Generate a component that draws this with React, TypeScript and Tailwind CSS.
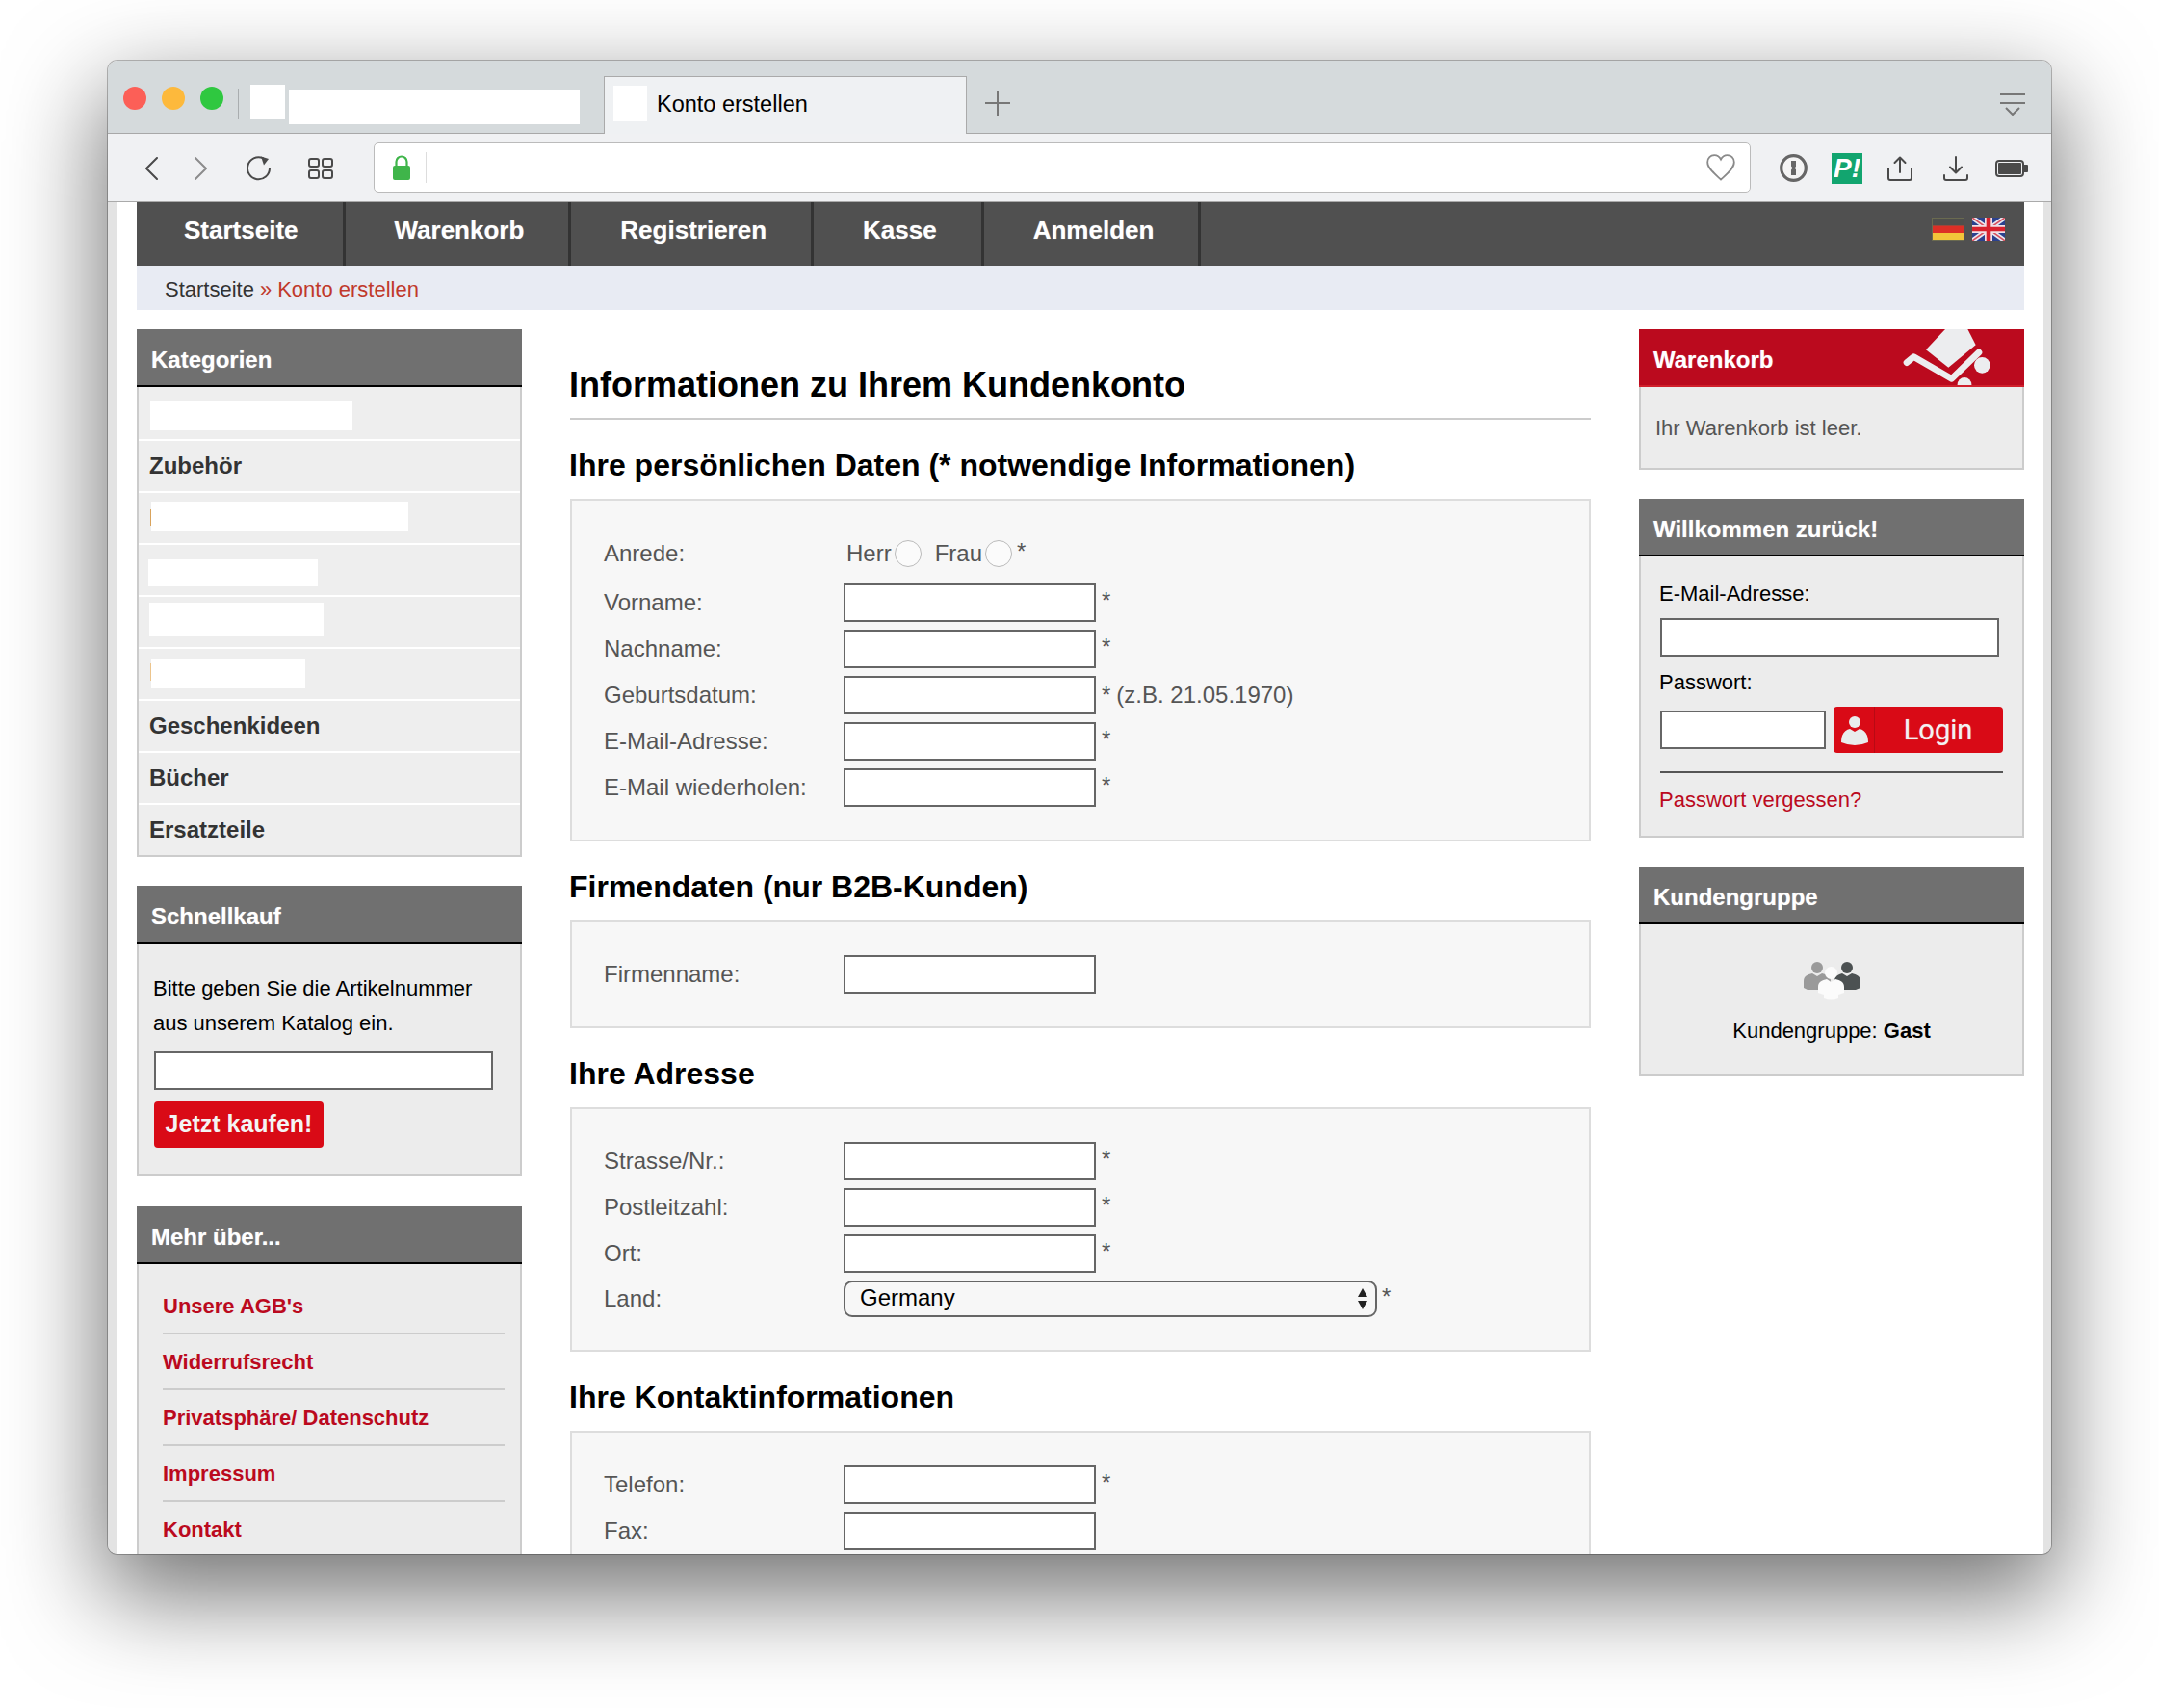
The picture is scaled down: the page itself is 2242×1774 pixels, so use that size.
import React from 'react';

const inputCls = 'block h-[40px] border-2 border-[#666] bg-white';

const Panel = ({ title, red, bodyCls, children, icon }: { title: string; red?: boolean; bodyCls: string; children: React.ReactNode; icon?: React.ReactNode }) => (
  <section>
    <div className={red
      ? 'relative flex h-[60px] items-center overflow-hidden border-b-2 border-[#d0202c] bg-[#bb0a1e] pl-[15px] pt-[6px] text-[24px] font-bold text-white [text-shadow:0_0_1px_rgba(255,255,255,0.5)]'
      : 'flex h-[60px] items-center border-b-2 border-black bg-[#707070] pl-[15px] pt-[6px] text-[24px] font-bold text-white [text-shadow:0_0_1px_rgba(255,255,255,0.5)]'}>
      {title}
      {icon}
    </div>
    <div className={`border-x-2 border-b-2 border-[#ccc] bg-[#ececec] ${bodyCls}`}>{children}</div>
  </section>
);

const categories = [
  { row: 'h-[56px] border-b-2 border-white', block: 'ml-[12px] mt-[15px] h-[30px] w-[210px]' },
  { row: 'h-[54px] border-b-2 border-white', label: 'Zubehör' },
  { row: 'h-[54px] border-b-2 border-white', block: 'ml-[13px] mt-[9px] h-[31px] w-[267px]', sliver: 'bg-[#d9a35c] mt-[17px] ml-[12px] h-[17px] w-px -mr-[13px]' },
  { row: 'h-[54px] border-b-2 border-white', block: 'ml-[10px] mt-[15px] h-[28px] w-[176px]' },
  { row: 'h-[54px] border-b-2 border-white', block: 'ml-[11px] mt-[6px] h-[35px] w-[181px]' },
  { row: 'h-[54px] border-b-2 border-white', block: 'ml-[13px] mt-[10px] h-[31px] w-[160px]', sliver: 'bg-[#ecc48c] mt-[15px] ml-[12px] h-[18px] w-px -mr-[13px]' },
  { row: 'h-[54px] border-b-2 border-white', label: 'Geschenkideen' },
  { row: 'h-[54px] border-b-2 border-white', label: 'Bücher' },
  { row: 'h-[52px]', label: 'Ersatzteile' },
];

const moreLinks = ["Unsere AGB's", 'Widerrufsrecht', 'Privatsphäre/ Datenschutz', 'Impressum', 'Kontakt'];

const LeftColumn = () => (
  <aside className="flex w-[400px] shrink-0 flex-col">
    <Panel title="Kategorien" bodyCls="">
      {categories.map((c, i) => (
        <div key={i} className={`flex items-start bg-[#eeeeee] ${c.row}`}>
          {c.sliver && <div className={c.sliver} />}
          {c.block && <div className={`bg-white ${c.block}`} />}
          {c.label && <span className="ml-[11px] text-[24px] font-bold leading-[52px] text-[#333]">{c.label}</span>}
        </div>
      ))}
    </Panel>
    <div className="mt-[30px]">
      <Panel title="Schnellkauf" bodyCls="h-[241px] pl-[16px] pt-[29px]">
        <p className="-ml-px text-[22px] leading-[36px] text-black">Bitte geben Sie die Artikelnummer<br />aus unserem Katalog ein.</p>
        <input type="text" className={`${inputCls} mt-[11px] w-[352px]`} />
        <button className="mt-[12px] h-[48px] w-[176px] rounded-[4px] bg-[#d90a16] text-[25px] font-bold text-[#f4f4f4]">Jetzt kaufen!</button>
      </Panel>
    </div>
    <div className="mt-[32px]">
      <Panel title="Mehr über..." bodyCls="h-[320px] pl-[25px] pt-[15px]">
        {moreLinks.map((l, i) => (
          <div key={l} className={`h-[58px] w-[355px] text-[22px] font-bold leading-[58px] text-[#bb0a1e] ${i < 4 ? 'border-b-2 border-[#ccc]' : ''}`}>{l}</div>
        ))}
      </Panel>
    </div>
  </aside>
);

const Field = ({ label, note, star = true }: { label: string; note?: string; star?: boolean }) => (
  <div className="flex h-[40px] items-center text-[24px] text-[#555]">
    <span className="w-[249px] shrink-0">{label}</span>
    <input type="text" className={`${inputCls} w-[262px]`} />
    {star && <span className={note ? 'ml-[6px]' : 'ml-[6px] -mt-[4px]'}>*{note && <span className="ml-[6px]">{note}</span>}</span>}
  </div>
);

const FormBox = ({ children, pb }: { children: React.ReactNode; pb: string }) => (
  <div className={`flex flex-col gap-[8px] border-2 border-[#ddd] bg-[#f7f7f7] pl-[33px] pt-[34px] ${pb}`}>{children}</div>
);

const Heading = ({ children, top }: { children: React.ReactNode; top: string }) => (
  <h2 className={`${top} -ml-px mb-[15px] text-[32px] font-bold leading-[40px] text-black`}>{children}</h2>
);

const Radio = () => <input type="radio" className="h-[28px] w-[28px] appearance-none rounded-full border border-[#bbb] bg-[#fbfbfb]" />;

const MainColumn = () => (
  <main className="ml-[50px] w-[1060px] shrink-0">
    <div className="mt-[38px] border-b-2 border-[#ccc] pb-[14px]">
      <h1 className="-ml-px text-[36px] font-bold leading-[40px] text-black">Informationen zu Ihrem Kundenkonto</h1>
    </div>
    <Heading top="mt-[27px]">Ihre persönlichen Daten (* notwendige Informationen)</Heading>
    <FormBox pb="pb-[34px]">
      <div className="mb-[3px] mt-[1px] flex h-[40px] items-center text-[24px] text-[#555]">
        <span className="w-[252px] shrink-0">Anrede:</span>
        <span>Herr</span>
        <span className="ml-[3px] flex"><Radio /></span>
        <span className="ml-[14px]">Frau</span>
        <span className="ml-[3px] flex"><Radio /></span>
        <span className="ml-[5px] -mt-[4px]">*</span>
      </div>
      <Field label="Vorname:" />
      <Field label="Nachname:" />
      <Field label="Geburtsdatum:" note="(z.B. 21.05.1970)" />
      <Field label="E-Mail-Adresse:" />
      <Field label="E-Mail wiederholen:" />
    </FormBox>
    <Heading top="mt-[27px]">Firmendaten (nur B2B-Kunden)</Heading>
    <FormBox pb="pb-[34px]">
      <Field label="Firmenname:" star={false} />
    </FormBox>
    <Heading top="mt-[27px]">Ihre Adresse</Heading>
    <FormBox pb="pb-[32px]">
      <Field label="Strasse/Nr.:" />
      <Field label="Postleitzahl:" />
      <Field label="Ort:" />
      <div className="flex h-[40px] items-center text-[24px] text-[#555]">
        <span className="-mt-[3px] w-[249px] shrink-0">Land:</span>
        <div className="relative -mt-[2px] h-[38px] w-[554px]">
          <select className="h-full w-full appearance-none rounded-[9px] border-2 border-[#666] bg-[#f7f7f7] pb-[2px] pl-[15px] text-[24px] leading-[30px] text-black">
            <option>Germany</option>
          </select>
          <svg className="pointer-events-none absolute right-[10px] top-[7px]" width="10" height="24" viewBox="0 0 10 24"><path d="M5 1 L10 10 H0Z M0 14 H10 L5 23Z" fill="#222" /></svg>
        </div>
        <span className="ml-[5px] -mt-[6px]">*</span>
      </div>
    </FormBox>
    <Heading top="mt-[27px]">Ihre Kontaktinformationen</Heading>
    <FormBox pb="pb-[33px]">
      <Field label="Telefon:" />
      <Field label="Fax:" star={false} />
    </FormBox>
  </main>
);

const CartIcon = () => (
  <svg className="absolute right-0 top-0 blur-[0.5px]" width="142" height="60" viewBox="0 0 426 180">
    <path d="M180 0 L250 0 L275 49 L190 119 L120 64Z" fill="#ecedef" />
    <path d="M60 104 L82 86 L200 154 L285 72" fill="none" stroke="#ecedef" strokeWidth="20" strokeLinecap="round" strokeLinejoin="round" />
    <circle cx="295" cy="112" r="25" fill="#ecedef" />
    <circle cx="240" cy="172" r="22" fill="#ecedef" />
  </svg>
);

const RightColumn = () => (
  <aside className="ml-[50px] flex w-[400px] shrink-0 flex-col">
    <Panel title="Warenkorb" red icon={<CartIcon />} bodyCls="h-[86px] pl-[15px] pt-[28px] text-[22px] leading-[30px] text-[#555]">
      Ihr Warenkorb ist leer.
    </Panel>
    <div className="mt-[30px]">
      <Panel title="Willkommen zurück!" bodyCls="h-[292px] pl-[20px] pt-[24px] text-[22px] leading-[30px] text-black">
        <div className="-ml-px">E-Mail-Adresse:</div>
        <input type="text" className={`${inputCls} mt-[10px] w-[352px]`} />
        <div className="-ml-px mt-[12px]">Passwort:</div>
        <div className="mt-[10px] flex items-center">
          <input type="password" className={`${inputCls} w-[172px]`} />
          <button className="ml-[8px] flex h-[48px] w-[176px] items-center rounded-[4px] bg-[#d90a16] text-white">
            <span className="flex h-full w-[43px] shrink-0 items-center justify-center border-r border-[#b80a14] pl-[2px]">
              <svg width="30" height="34" viewBox="0 0 30 34"><circle cx="15" cy="9" r="6" fill="#e9ecec" /><path d="M1 30 C1 21 5 17 10 16 L15 19 L20 16 C25 17 29 21 29 30 Q15 36 1 30Z" fill="#e9ecec" /></svg>
            </span>
            <span className="flex-1 pr-[2px] text-center font-['Roboto',sans-serif] text-[29px] font-normal leading-none text-[#f2f2f2] [text-shadow:0_0_1px_rgba(255,255,255,0.6)]">Login</span>
          </button>
        </div>
        <div className="mt-[19px] h-[2px] w-[356px] bg-[#555]" />
        <div className="-ml-px mt-[13px] text-[#bb0a1e]">Passwort vergessen?</div>
      </Panel>
    </div>
    <div className="mt-[30px]">
      <Panel title="Kundengruppe" bodyCls="flex h-[158px] flex-col items-center pt-[39px] text-[22px] text-black">
        <svg className="ml-[2px] blur-[0.4px]" width="60" height="40" viewBox="0 0 60 40">
          <circle cx="14" cy="6" r="6" fill="#9a9a9a" />
          <path d="M0 27 V20 C0 15 4 13 9 12 L14 15 L19 12 C24 13 28 15 28 20 V29 H4Z" fill="#9a9a9a" />
          <circle cx="45" cy="6" r="6" fill="#4c5152" />
          <path d="M32 29 V20 C32 15 36 13 40 12 L45 15 L50 12 C55 13 59 15 59 20 V27 L54 29Z" fill="#4c5152" />
          <circle cx="28.5" cy="11.5" r="6.5" fill="#fbfbfb" />
          <path d="M15 32 V26 C15 21 19 19 24 18 L28.5 21 L33 18 C38 19 42 21 42 26 V32 L36 34 V38 Q28.5 41 21 38 V34Z" fill="#fbfbfb" />
        </svg>
        <div className="mt-[17px] leading-[30px]">Kundengruppe: <b>Gast</b></div>
      </Panel>
    </div>
  </aside>
);

const FlagDE = () => (
  <svg className="blur-[0.4px]" width="34" height="24" viewBox="0 0 34 24">
    <rect width="34" height="24" fill="#6a6a50" />
    <rect x="1" y="1" width="32" height="7.5" fill="#4f4f4c" />
    <rect x="1" y="8.5" width="32" height="7.5" fill="#dc2f26" />
    <rect x="1" y="16" width="32" height="7" fill="#f2c53a" />
  </svg>
);

const FlagUK = () => (
  <svg className="blur-[0.4px]" width="34" height="24" viewBox="0 0 34 24">
    <rect width="34" height="24" fill="#2b418f" />
    <path d="M0 0 L34 24 M34 0 L0 24" stroke="#e8e8f0" strokeWidth="5" />
    <path d="M0 0 L34 24 M34 0 L0 24" stroke="#d8505e" strokeWidth="1.6" />
    <path d="M17 0 V24 M0 12 H34" stroke="#f0e0e6" strokeWidth="8" />
    <path d="M17 0 V24 M0 12 H34" stroke="#d9222e" strokeWidth="4.6" />
  </svg>
);

const navItems = ['Startseite', 'Warenkorb', 'Registrieren', 'Kasse', 'Anmelden'];

const stroke = { fill: 'none', stroke: '#4a4a4a', strokeWidth: 2, strokeLinecap: 'round' as const, strokeLinejoin: 'round' as const };

const TitleBar = () => (
  <div className="relative flex h-[76px] shrink-0 items-start border-b border-[#a8a8a8] bg-[#d5dadc] pl-[16px]">
    <div className="mt-[27px] flex gap-[16px]">
      <span className="h-[24px] w-[24px] rounded-full bg-[#fc5f57]" />
      <span className="h-[24px] w-[24px] rounded-full bg-[#fdb93c]" />
      <span className="h-[24px] w-[24px] rounded-full bg-[#2fc840]" />
    </div>
    <span className="ml-[15px] mt-[29px] h-[32px] w-px bg-[#a9adaf]" />
    <span className="ml-[12px] mt-[25px] h-[36px] w-[36px] bg-white" />
    <span className="ml-[4px] mt-[30px] h-[36px] w-[302px] bg-white" />
    <div className="relative z-10 ml-[25px] mt-[16px] flex h-[60px] w-[377px] items-start border-x border-t border-[#aaa] bg-[#eff1f3] pl-[9px]">
      <span className="mt-[9px] h-[37px] w-[35px] bg-white" />
      <span className="ml-[10px] mt-[13px] text-[23.5px] leading-[30px] text-black">Konto erstellen</span>
    </div>
    <svg className="ml-[19px] mt-[31px]" width="26" height="26" viewBox="0 0 26 26"><path d="M13 0 V26 M0 13 H26" stroke="#777" strokeWidth="2" /></svg>
    <svg className="ml-auto mr-[27px] mt-[34px]" width="26" height="23" viewBox="0 0 26 23"><path d="M0 1 H26 M0 10 H26" stroke="#777" strokeWidth="2" /><path d="M6 15 L13 22 L20 15" fill="none" stroke="#777" strokeWidth="2" /></svg>
  </div>
);

const ToolBar = () => (
  <div className="flex h-[71px] shrink-0 items-center border-b border-[#aaa] bg-[#f0f1f3] pl-[38px] pt-[1px]">
    <svg width="14" height="24" viewBox="0 0 14 24"><path d="M13 1 L2 12 L13 23" {...stroke} /></svg>
    <svg className="ml-[38px]" width="14" height="24" viewBox="0 0 14 24"><path d="M1 1 L12 12 L1 23" {...stroke} stroke="#8c8c8c" /></svg>
    <svg className="ml-[40px]" width="26" height="26" viewBox="0 0 26 26"><path d="M24 13 A11.5 11.5 0 1 1 17 2.2" {...stroke} /><path d="M15 0.5 L23 3 L18 9.5Z" fill="#4a4a4a" /></svg>
    <svg className="ml-[38px]" width="26" height="22" viewBox="0 0 26 22">
      <rect x="1" y="1" width="10" height="8" rx="2" {...stroke} />
      <rect x="15" y="1" width="10" height="8" rx="2" {...stroke} />
      <rect x="1" y="13" width="10" height="8" rx="2" {...stroke} />
      <rect x="15" y="13" width="10" height="8" rx="2" {...stroke} />
    </svg>
    <div className="-mt-[2px] ml-[42px] flex h-[52px] w-[1430px] items-center rounded-[5px] border border-[#bbb] bg-white pl-[18px]">
      <svg width="20" height="26" viewBox="0 0 20 26"><path d="M4.5 12 V7 A5.5 5.5 0 0 1 15.5 7 V12" fill="none" stroke="#3fb54a" strokeWidth="2.2" /><rect x="1" y="11" width="18" height="15" rx="2" fill="#3fb54a" /></svg>
      <span className="ml-[15px] h-[32px] w-px bg-[#ddd]" />
      <svg className="ml-auto mr-[15px]" width="30" height="28" viewBox="0 0 30 28"><path d="M15 26.5 C9 21 1.2 15 1.2 8.5 C1.2 4 4.5 1.2 8.3 1.2 C11 1.2 13.6 2.8 15 5.5 C16.4 2.8 19 1.2 21.7 1.2 C25.5 1.2 28.8 4 28.8 8.5 C28.8 15 21 21 15 26.5Z" fill="#fff" stroke="#8a8a8a" strokeWidth="1.8" /></svg>
    </div>
    <svg className="ml-[30px]" width="29" height="29" viewBox="0 0 29 29"><circle cx="14.5" cy="14.5" r="12.8" fill="#f4f4f4" stroke="#666" strokeWidth="3.2" /><path d="M12 7 H17 V13 L15.5 14.5 L17 16 V22 H12 V16.5 L13.5 14.5 L12 12.5Z" fill="#666" /></svg>
    <span className="ml-[25px] flex h-[32px] w-[32px] items-center justify-center bg-[#12a56f] text-[28px] font-bold italic leading-none text-white">P!</span>
    <svg className="ml-[26px]" width="26" height="26" viewBox="0 0 26 26"><path d="M13 17 V2 M7.5 7 L13 1.5 L18.5 7 M1 13 V23 Q1 25 3 25 H23 Q25 25 25 23 V13" {...stroke} /></svg>
    <svg className="ml-[32px]" width="26" height="26" viewBox="0 0 26 26"><path d="M13 1 V17 M7 11.5 L13 17.5 L19 11.5 M1 20 V23 Q1 25 3 25 H23 Q25 25 25 23 V20" {...stroke} /></svg>
    <svg className="ml-[28px]" width="34" height="18" viewBox="0 0 34 18"><rect x="1" y="1" width="28" height="16" rx="3" fill="none" stroke="#4a4a4a" strokeWidth="2" /><rect x="3" y="3" width="24" height="12" rx="1" fill="#4a4a4a" /><path d="M30 5 H33 Q34 5 34 6 V12 Q34 13 33 13 H30Z" fill="#4a4a4a" /></svg>
  </div>
);

export default function App() {
  return (
    <div className="h-[1774px] overflow-hidden bg-white pl-[112px] pt-[63px] font-['Liberation_Sans',Arial,sans-serif]">
      <div className="flex h-[1551px] w-[2018px] flex-col overflow-hidden rounded-[10px] shadow-[0_0_0_1px_rgba(0,0,0,0.25),0_38px_100px_6px_rgba(0,0,0,0.55)]">
        <TitleBar />
        <ToolBar />
        <div className="flex min-h-0 flex-1">
          <div className="w-[10px] shrink-0 bg-[#e3e3e3]" />
          <div className="min-w-0 flex-1 overflow-hidden bg-white px-[20px]">
            <nav className="flex h-[66px] items-stretch bg-[#505050]">
              {navItems.map((n) => (
                <a key={n} className="flex items-center border-r-[3px] border-[#333] pb-[8px] pl-[51px] pr-[46px] text-[26px] font-bold text-white [text-shadow:0_0_1px_rgba(255,255,255,0.5)] first:pl-[49px]">{n}</a>
              ))}
              <div className="ml-auto mr-[20px] mt-[16px] flex gap-[8px] self-start">
                <FlagDE />
                <FlagUK />
              </div>
            </nav>
            <div className="flex h-[46px] items-center bg-[#e8ebf3] pl-[29px] pt-[2px] text-[22px] text-[#c0392b]">
              <span className="text-[#333]">Startseite</span>
              <span className="ml-[6px]">»</span>
              <span className="ml-[6px]">Konto erstellen</span>
            </div>
            <div className="flex pt-[20px]">
              <LeftColumn />
              <MainColumn />
              <RightColumn />
            </div>
          </div>
          <div className="w-[8px] shrink-0 bg-[#e3e3e3]" />
        </div>
      </div>
    </div>
  );
}
